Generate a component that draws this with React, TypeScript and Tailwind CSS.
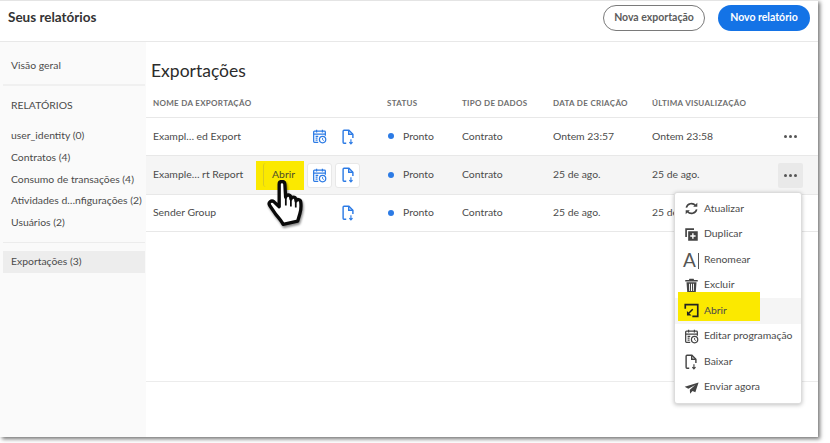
import { ReactNode } from "react"

const SIDE_ITEMS = ["user_identity (0)", "Contratos (4)", "Consumo de transações (4)", "Atividades d…nfigurações (2)", "Usuários (2)"]

const ROWS = [
  { name: "Exampl… ed Export", created: "Ontem 23:57", viewed: "Ontem 23:58", height: "h-[38px]", schedule: true, hover: false },
  { name: "Example… rt Report", created: "25 de ago.", viewed: "25 de ago.", height: "h-[39px]", schedule: true, hover: true },
  { name: "Sender Group", created: "25 de ago.", viewed: "25 de ago.", height: "h-[37px]", schedule: false, hover: false },
]

function CalendarIcon({ className }: { className?: string }) {
  return (
    <svg viewBox="0 0 18 18" className={className} fill="none" stroke="currentColor" strokeWidth="1.5">
      <path d="M7.500 16H3a1 1 0 0 1-1-1V3.600a1 1 0 0 1 1-1h12a1 1 0 0 1 1 1V8" />
      <path d="M5.500 .8v3.400M12.500 .8v3.400M2 6.200h14" />
      <path d="M4.300 8.800h3.200M4.300 11h2.400M4.300 13.300h2.400" />
      <circle cx="12.700" cy="12.700" r="3.800" />
      <path d="M12.700 10.700v2.200l1.500 1" strokeWidth="1.100" />
    </svg>
  )
}

function DocIcon({ className }: { className?: string }) {
  return (
    <svg viewBox="0 0 18 18" className={className} fill="none" stroke="currentColor" strokeWidth="1.600">
      <path d="M7 16H4.500a1 1 0 0 1-1-1V2.500a1 1 0 0 1 1-1h5.500L14.500 6v4" />
      <path d="M9.800 1.500V6h4.700" />
      <path d="M12.300 11.500v5M10.500 14.800l1.800 1.900 1.800-1.900" strokeWidth="1.300" />
    </svg>
  )
}

function RefreshIcon({ className }: { className?: string }) {
  return (
    <svg viewBox="0 0 18 18" className={className} fill="none" stroke="currentColor" strokeWidth="2">
      <path d="M2.800 8a6.300 6.300 0 0 1 11-2.600" />
      <path d="M15.200 10a6.300 6.300 0 0 1-11 2.600" />
      <path d="M16 2v5h-5z" fill="currentColor" stroke="none" />
      <path d="M2 16v-5h5z" fill="currentColor" stroke="none" />
    </svg>
  )
}

function DuplicateIcon({ className }: { className?: string }) {
  return (
    <svg viewBox="0 0 18 18" className={className} fill="currentColor">
      <path d="M1.500 1.500h10.500v2H3.500v8.500h-2z" />
      <path d="M5 5h11.500v11.500H5zM9.800 7.500v2.400H7.500v1.700h2.300V14h1.700v-2.400h2.400V9.900h-2.400V7.500z" fillRule="evenodd" />
    </svg>
  )
}

function TrashIcon({ className }: { className?: string }) {
  return (
    <svg viewBox="0 0 18 18" className={className} fill="currentColor">
      <path d="M6.500 .8h5l.6 1.700H16.500v1.800h-15V2.500h4.400z" />
      <path d="M3 5h12l-.9 12.500H3.900zM6 7l.3 8.500h1L7.100 7zM8.400 7v8.500h1.200V7zM10.900 7l-.2 8.500h1L12 7z" fillRule="evenodd" />
    </svg>
  )
}

function OpenIcon({ className }: { className?: string }) {
  return (
    <svg viewBox="0 0 18 18" className={className} fill="none" stroke="#222" strokeWidth="2">
      <path d="M1.500 7V2h15v14H10" />
      <path d="M10.500 7.500 5 13" strokeWidth="1.800" />
      <path d="M3.500 9.500v5.500H9z" fill="#222" stroke="none" />
    </svg>
  )
}

function SendIcon({ className }: { className?: string }) {
  return (
    <svg viewBox="0 0 18 18" className={className} fill="currentColor">
      <path d="M17.500 3 .8 8.200l4.400 2.300L13.500 6 7 11.700l.3 4.800 2.900-3.200 3.400 1.500z" />
    </svg>
  )
}

// Pointer hand laid over the hovered row
function HandCursor({ className }: { className?: string }) {
  return (
    <svg viewBox="0 0 40 48" className={className}>
      <path
        d="M12.500 4c0-3.400 5.600-3.400 5.800 0l.8 13.500c.4-3 4.800-3 5.200 0l.3 2c.4-2.800 4.600-2.600 5 .3l.2 1.600c.7-2.300 4.500-1.800 4.800 1 .5 4.200.3 8.400-.9 12.200l-2.200 7.400-15 3.400c-1.500-3.200-4-6.200-7.500-10.200L2.800 26c-2-2.800 1.600-6 4.400-3.700l5.300 5z"
        fill="#fff"
        stroke="#0a0a0a"
        strokeWidth="3.400"
        strokeLinejoin="round"
      />
      <path d="M19.300 18v8M24.500 20v7M29.500 22v6" stroke="#0a0a0a" strokeWidth="1.800" fill="none" />
    </svg>
  )
}

function IconCell({ boxed, children }: { boxed: boolean; children: ReactNode }) {
  return (
    <span
      className={`flex h-[25px] w-[25px] items-center justify-center rounded-[3px] text-[#2c7be5] ${boxed ? "border border-[#e8e8e8] bg-white" : ""}`}
    >
      {children}
    </span>
  )
}

const MENU = [
  { label: "Atualizar", icon: <RefreshIcon className="h-[15px] w-[15px]" /> },
  { label: "Duplicar", icon: <DuplicateIcon className="h-[15px] w-[15px]" /> },
  { label: "Renomear", icon: <span className="text-[19px] leading-none text-[#555]">A<span className="ml-[2px] inline-block h-[16px] w-px bg-[#555] align-[-2px]" /></span> },
  { label: "Excluir", icon: <TrashIcon className="h-[15px] w-[15px]" /> },
  { label: "Abrir", icon: <OpenIcon className="h-[15px] w-[15px]" />, active: true },
  { label: "Editar programação", icon: <CalendarIcon className="h-[15px] w-[15px]" /> },
  { label: "Baixar", icon: <DocIcon className="h-[16px] w-[16px]" /> },
  { label: "Enviar agora", icon: <SendIcon className="h-[15px] w-[15px]" /> },
]

export default function App() {
  return (
    <div className="h-[443px] w-[830px] overflow-hidden bg-white font-['Lato','Liberation_Sans',sans-serif] text-[10.400px] text-[#4b4b4b]">
      <div className="relative flex h-[437px] w-[818px] flex-col border-t border-[#e4e4e4] bg-white shadow-[2px_2px_4px_rgba(0,0,0,0.55)]">
        <header className="flex h-[41px] shrink-0 items-start justify-between border-b border-[#e8e8e8] pr-2 pl-2">
          <h1 className="mt-[6px] text-[13.500px] font-bold text-[#333]">Seus relatórios</h1>
          <div className="mt-1 flex gap-[13px]">
            <button className="h-[26px] w-[102px] rounded-full border border-[#7a7a7a] text-[10.500px] font-bold text-[#5c5c5c]">Nova exportação</button>
            <button className="h-[26px] w-[92px] rounded-full bg-[#1473e6] text-[10.500px] font-bold text-white">Novo relatório</button>
          </div>
        </header>

        <div className="flex min-h-0 flex-1">
          <aside className="w-[146px] shrink-0 bg-[#fafafa] pl-[3px]">
            <div className="mr-px flex h-[44px] items-center border-b-2 border-[#f0f0f0] pt-[6px] pl-2">Visão geral</div>
            <div className="pt-[11px] pl-2 leading-[16px]">RELATÓRIOS</div>
            <ul className="mr-px mt-[12px] border-b border-[#ececec] pb-[8px] pl-2">
              {SIDE_ITEMS.map((item) => (
                <li key={item} className="flex h-[21.800px] items-center whitespace-nowrap">{item}</li>
              ))}
            </ul>
            <div className="mr-px mt-[8px] flex h-[22px] items-center bg-[#ededed] pl-2">Exportações (3)</div>
          </aside>

          <main className="flex-1">
            <h2 className="mt-[16px] ml-[5px] text-[17.500px] leading-[26px] text-[#2c2c2c]">Exportações</h2>
            <div className="mt-[8px] grid h-[26px] grid-cols-[234px_75px_91px_99px_1fr] items-center border-b border-[#e8e8e8] pb-1 pl-[7px] text-[8px] font-bold tracking-[0.3px] text-[#6e6e6e]">
              <span>NOME DA EXPORTAÇÃO</span>
              <span>STATUS</span>
              <span>TIPO DE DADOS</span>
              <span>DATA DE CRIAÇÃO</span>
              <span>ÚLTIMA VISUALIZAÇÃO</span>
            </div>
            {ROWS.map((row) => (
              <div
                key={row.name}
                className={`relative grid ${row.height} grid-cols-[234px_75px_91px_99px_1fr_auto] items-center border-b border-[#e8e8e8] pl-[7px] ${row.hover ? "bg-[#f5f5f5]" : ""}`}
              >
                <div className="flex items-center">
                  <span className="w-[103px] whitespace-nowrap">{row.name}</span>
                  {row.hover ? (
                    <span className="flex h-[29px] w-[48px] items-center bg-[#fbe900] pl-[7px]">
                      <span className="flex h-[24px] w-[40px] items-center justify-center rounded-l-[3px] border-l border-[#d9cc20] text-[#4b4b2b]">Abrir</span>
                    </span>
                  ) : (
                    <span className="w-[48px]" />
                  )}
                  <span className="ml-[3px] flex gap-[3px]">
                    {row.schedule ? (
                      <IconCell boxed={row.hover}><CalendarIcon className="h-[15px] w-[15px]" /></IconCell>
                    ) : (
                      <span className="w-[25px]" />
                    )}
                    <IconCell boxed={row.hover}><DocIcon className="h-[16px] w-[16px]" /></IconCell>
                  </span>
                </div>
                <div className="flex items-center">
                  <span className="mr-[9px] ml-px h-[6px] w-[6px] rounded-full bg-[#2c7be5]" />
                  Pronto
                </div>
                <span>Contrato</span>
                <span>{row.created}</span>
                <span>{row.viewed}</span>
                <span className={`mr-[15px] flex h-[25px] w-[25px] items-center justify-center gap-[2px] rounded-[2px] ${row.hover ? "bg-[#e9e9e9]" : ""}`}>
                  <i className="h-[3px] w-[3px] rounded-full bg-[#555]" />
                  <i className="h-[3px] w-[3px] rounded-full bg-[#555]" />
                  <i className="h-[3px] w-[3px] rounded-full bg-[#555]" />
                </span>
              </div>
            ))}
            <div className="mt-[149px] border-b border-[#ececec]" />
          </main>
        </div>

        <HandCursor className="absolute top-[179px] left-[267px] h-[47px] w-[39px] drop-shadow-[1px_2px_1px_rgba(0,0,0,0.45)]" />

        <div className="absolute top-[191px] left-[674px] w-[128px] rounded-[3px] border border-[#dcdcdc] bg-white pt-[3px] pb-[3px] shadow-[0_1px_4px_rgba(0,0,0,0.25)]">
          {MENU.map((item) => (
            <div key={item.label} className={`relative flex h-[25.500px] items-center whitespace-nowrap ${item.active ? "bg-[#f5f5f5]" : ""}`}>
              {item.active && <span className="absolute top-[-6px] left-[3px] h-[29px] w-[82px] bg-[#fbe900]" />}
              <span className="relative flex w-[29px] justify-center pl-[3px] text-[#444]">{item.icon}</span>
              <span className="relative">{item.label}</span>
            </div>
          ))}
        </div>
      </div>
    </div>
  )
}
